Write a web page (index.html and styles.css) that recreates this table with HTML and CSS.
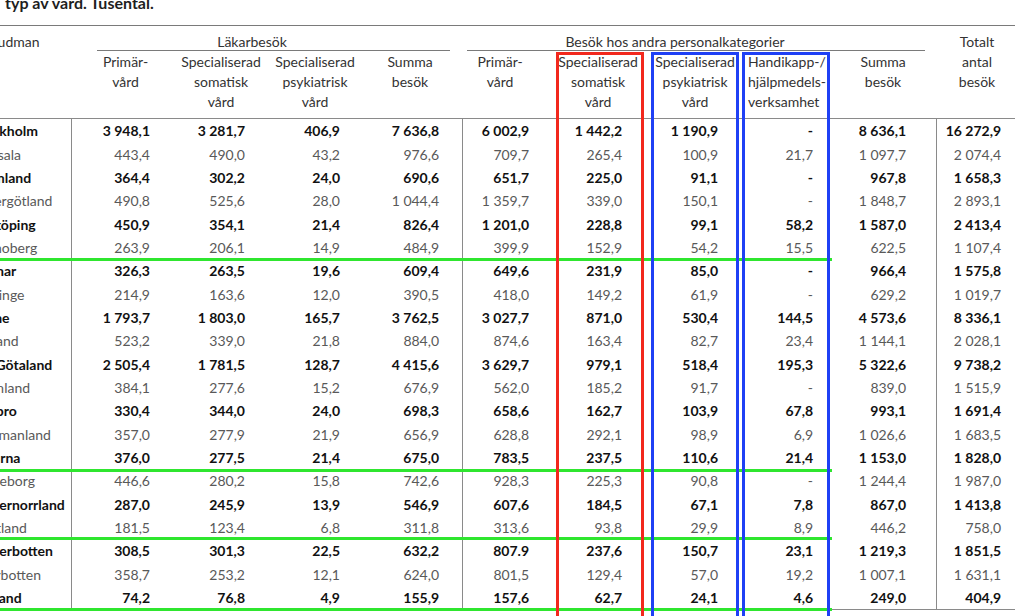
FILE: index.html
```html
<!DOCTYPE html>
<html lang="sv">
<head>
<meta charset="utf-8">
<title>Besök efter typ av vård</title>
<link rel="stylesheet" href="styles.css">
</head>
<body>
<div class="sheet">
  <div class="content">
    <div class="title">typ av vård. Tusental.</div>
    <table class="tbl">
      <colgroup>
        <col class="c-name"><col class="c95"><col class="c95"><col class="c95"><col class="c106">
        <col class="c87"><col class="c95"><col class="c95"><col class="c95"><col class="c102"><col class="c78">
      </colgroup>
      <thead>
        <tr class="r1">
          <th class="rs name-h" rowspan="2">Huvudman</th>
          <th colspan="4"><div class="grp grp-l">Läkarbesök</div></th>
          <th colspan="5"><div class="grp grp-a">Besök hos andra personalkategorier</div></th>
          <th class="rs tot-h" rowspan="2">Totalt<br>antal<br>besök</th>
        </tr>
        <tr class="r2">
          <th>Primär-<br>vård</th>
          <th>Specialiserad<br>somatisk<br>vård</th>
          <th>Specialiserad<br>psykiatrisk<br>vård</th>
          <th>Summa<br>besök</th>
          <th>Primär-<br>vård</th>
          <th>Specialiserad<br>somatisk<br>vård</th>
          <th>Specialiserad<br>psykiatrisk<br>vård</th>
          <th class="left">Handikapp-/<br>hjälpmedels-<br>verksamhet</th>
          <th>Summa<br>besök</th>
        </tr>
      </thead>
      <tbody>
        <tr><td>Stockholm</td><td>3 948,1</td><td>3 281,7</td><td>406,9</td><td>7 636,8</td><td>6 002,9</td><td>1 442,2</td><td>1 190,9</td><td>-</td><td>8 636,1</td><td>16 272,9</td></tr>
        <tr><td>Uppsala</td><td>443,4</td><td>490,0</td><td>43,2</td><td>976,6</td><td>709,7</td><td>265,4</td><td>100,9</td><td>21,7</td><td>1 097,7</td><td>2 074,4</td></tr>
        <tr><td>Sörmland</td><td>364,4</td><td>302,2</td><td>24,0</td><td>690,6</td><td>651,7</td><td>225,0</td><td>91,1</td><td>-</td><td>967,8</td><td>1 658,3</td></tr>
        <tr><td>Östergötland</td><td>490,8</td><td>525,6</td><td>28,0</td><td>1 044,4</td><td>1 359,7</td><td>339,0</td><td>150,1</td><td>-</td><td>1 848,7</td><td>2 893,1</td></tr>
        <tr><td>Jönköping</td><td>450,9</td><td>354,1</td><td>21,4</td><td>826,4</td><td>1 201,0</td><td>228,8</td><td>99,1</td><td>58,2</td><td>1 587,0</td><td>2 413,4</td></tr>
        <tr><td>Kronoberg</td><td>263,9</td><td>206,1</td><td>14,9</td><td>484,9</td><td>399,9</td><td>152,9</td><td>54,2</td><td>15,5</td><td>622,5</td><td>1 107,4</td></tr>
        <tr><td>Kalmar</td><td>326,3</td><td>263,5</td><td>19,6</td><td>609,4</td><td>649,6</td><td>231,9</td><td>85,0</td><td>-</td><td>966,4</td><td>1 575,8</td></tr>
        <tr><td>Blekinge</td><td>214,9</td><td>163,6</td><td>12,0</td><td>390,5</td><td>418,0</td><td>149,2</td><td>61,9</td><td>-</td><td>629,2</td><td>1 019,7</td></tr>
        <tr><td>Skåne</td><td>1 793,7</td><td>1 803,0</td><td>165,7</td><td>3 762,5</td><td>3 027,7</td><td>871,0</td><td>530,4</td><td>144,5</td><td>4 573,6</td><td>8 336,1</td></tr>
        <tr><td>Halland</td><td>523,2</td><td>339,0</td><td>21,8</td><td>884,0</td><td>874,6</td><td>163,4</td><td>82,7</td><td>23,4</td><td>1 144,1</td><td>2 028,1</td></tr>
        <tr><td>V:a Götaland</td><td>2 505,4</td><td>1 781,5</td><td>128,7</td><td>4 415,6</td><td>3 629,7</td><td>979,1</td><td>518,4</td><td>195,3</td><td>5 322,6</td><td>9 738,2</td></tr>
        <tr><td>Värmland</td><td>384,1</td><td>277,6</td><td>15,2</td><td>676,9</td><td>562,0</td><td>185,2</td><td>91,7</td><td>-</td><td>839,0</td><td>1 515,9</td></tr>
        <tr><td>Örebro</td><td>330,4</td><td>344,0</td><td>24,0</td><td>698,3</td><td>658,6</td><td>162,7</td><td>103,9</td><td>67,8</td><td>993,1</td><td>1 691,4</td></tr>
        <tr><td>Västmanland</td><td>357,0</td><td>277,9</td><td>21,9</td><td>656,9</td><td>628,8</td><td>292,1</td><td>98,9</td><td>6,9</td><td>1 026,6</td><td>1 683,5</td></tr>
        <tr><td>Dalarna</td><td>376,0</td><td>277,5</td><td>21,4</td><td>675,0</td><td>783,5</td><td>237,5</td><td>110,6</td><td>21,4</td><td>1 153,0</td><td>1 828,0</td></tr>
        <tr><td>Gävleborg</td><td>446,6</td><td>280,2</td><td>15,8</td><td>742,6</td><td>928,3</td><td>225,3</td><td>90,8</td><td>-</td><td>1 244,4</td><td>1 987,0</td></tr>
        <tr><td>Västernorrland</td><td>287,0</td><td>245,9</td><td>13,9</td><td>546,9</td><td>607,6</td><td>184,5</td><td>67,1</td><td>7,8</td><td>867,0</td><td>1 413,8</td></tr>
        <tr><td>Jämtland</td><td>181,5</td><td>123,4</td><td>6,8</td><td>311,8</td><td>313,6</td><td>93,8</td><td>29,9</td><td>8,9</td><td>446,2</td><td>758,0</td></tr>
        <tr><td>Västerbotten</td><td>308,5</td><td>301,3</td><td>22,5</td><td>632,2</td><td>807.9</td><td>237,6</td><td>150,7</td><td>23,1</td><td>1 219,3</td><td>1 851,5</td></tr>
        <tr><td>Norrbotten</td><td>358,7</td><td>253,2</td><td>12,1</td><td>624,0</td><td>801,5</td><td>129,4</td><td>57,0</td><td>19,2</td><td>1 007,1</td><td>1 631,1</td></tr>
        <tr><td>Gotland</td><td>74,2</td><td>76,8</td><td>4,9</td><td>155,9</td><td>157,6</td><td>62,7</td><td>24,1</td><td>4,6</td><td>249,0</td><td>404,9</td></tr>
      </tbody>
    </table>
  </div>

  <div class="mark-green g1"></div>
  <div class="mark-green g2"></div>
  <div class="mark-green g3"></div>
  <div class="mark-green g4"></div>
  <div class="mark-box red"></div>
  <div class="mark-box blue b1"></div>
  <div class="mark-box blue b2"></div>
</div>
</body>
</html>
```

FILE: styles.css
```css
* { box-sizing: border-box; }

html, body {
  margin: 0;
  padding: 0;
  background: #fff;
  overflow: hidden;
}

body {
  font-family: Lato, "Liberation Sans", sans-serif;
  font-size: 14px;
  color: #222;
}

.sheet {
  position: relative;
  width: 1024px;
  height: 616px;
  overflow: hidden;
}

.content {
  margin-left: -28px;
}

.title {
  margin-top: -7px;
  height: 20px;
  line-height: 20px;
  padding-left: 33px;
  font-size: 16px;
  font-weight: 700;
  color: #1e1e1e;
  white-space: nowrap;
}

.tbl {
  margin-top: 12px;
  width: 1043px;
  table-layout: fixed;
  border-collapse: separate;
  border-spacing: 0;
  border-top: 1px solid #7a7a7a;
}

.c-name { width: 100px; }
.c95 { width: 95px; }
.c106 { width: 106px; }
.c87 { width: 87px; }
.c102 { width: 102px; }
.c78 { width: 78px; }

/* header */
.tbl th {
  font-weight: 400;
  color: #333;
  vertical-align: top;
  padding: 0;
  white-space: nowrap;
  text-align: center;
  line-height: 20px;
}

.tbl .r1 th { height: 26px; }
.tbl .r2 th { height: 67px; border-bottom: 1px solid #8a8a8a; }

.tbl th.rs {
  padding-top: 6px;
  border-bottom: 1px solid #8a8a8a;
}
.tbl th.name-h { text-align: left; }
.tbl th.tot-h { padding-left: 2px; }

.grp {
  margin-top: 7px;
  line-height: 17px;
  border-bottom: 1px solid #7a7a7a;
}
.grp-l { margin-left: 25px; margin-right: 13px; padding-right: 43px; }
.grp-a { margin-left: 4px; margin-right: 12px; padding-right: 42px; }

.r2 th:nth-child(1) { padding-left: 12px; }
.r2 th:nth-child(2) { padding-left: 13px; }
.r2 th:nth-child(3) { padding-left: 11px; }
.r2 th:nth-child(5) { padding-right: 13px; }
.r2 th:nth-child(6) { padding-left: 1px; }
.r2 th:nth-child(7) { padding-left: 5px; }
.r2 th.left { text-align: left; padding-left: 8px; }
.r2 th:nth-child(9) { padding-right: 6px; }

/* body */
.tbl td {
  height: 23.35px;
  padding: 0;
  line-height: 23px;
  text-align: right;
  white-space: nowrap;
  overflow: hidden;
}

.tbl tbody tr:nth-child(odd) td { font-weight: 700; color: #111; }
.tbl tbody tr:nth-child(even) td { font-weight: 400; color: #595959; }

.tbl tbody tr:last-child td { border-bottom: 1px solid #8a8a8a; }

.tbl td:nth-child(1) { text-align: left; border-right: 1px solid #8a8a8a; }
.tbl td:nth-child(2) { padding-right: 17px; }
.tbl td:nth-child(3) { padding-right: 17px; }
.tbl td:nth-child(4) { padding-right: 17px; }
.tbl td:nth-child(5) { padding-right: 23px; border-right: 1px solid #8a8a8a; }
.tbl td:nth-child(6) { padding-right: 21px; }
.tbl td:nth-child(7) { padding-right: 23px; }
.tbl td:nth-child(8) { padding-right: 22px; }
.tbl td:nth-child(9) { padding-right: 22px; }
.tbl td:nth-child(10) { padding-right: 30px; border-right: 1px solid #8a8a8a; }
.tbl td:nth-child(11) { padding-right: 14px; }

/* annotation overlays */
.mark-green {
  position: absolute;
  left: 0;
  width: 832px;
  height: 3px;
  background: #2fe62f;
}
.g1 { top: 258px; }
.g2 { top: 469px; }
.g3 { top: 537px; }
.g4 { top: 608px; }

.mark-box {
  position: absolute;
  top: 52px;
  height: 640px;
  width: 88px;
  border: 3px solid;
}
.red { left: 556px; border-color: #f2281d; }
.blue { border-color: #1f40f5; }
.b1 { left: 651px; }
.b2 { left: 742px; }
```
